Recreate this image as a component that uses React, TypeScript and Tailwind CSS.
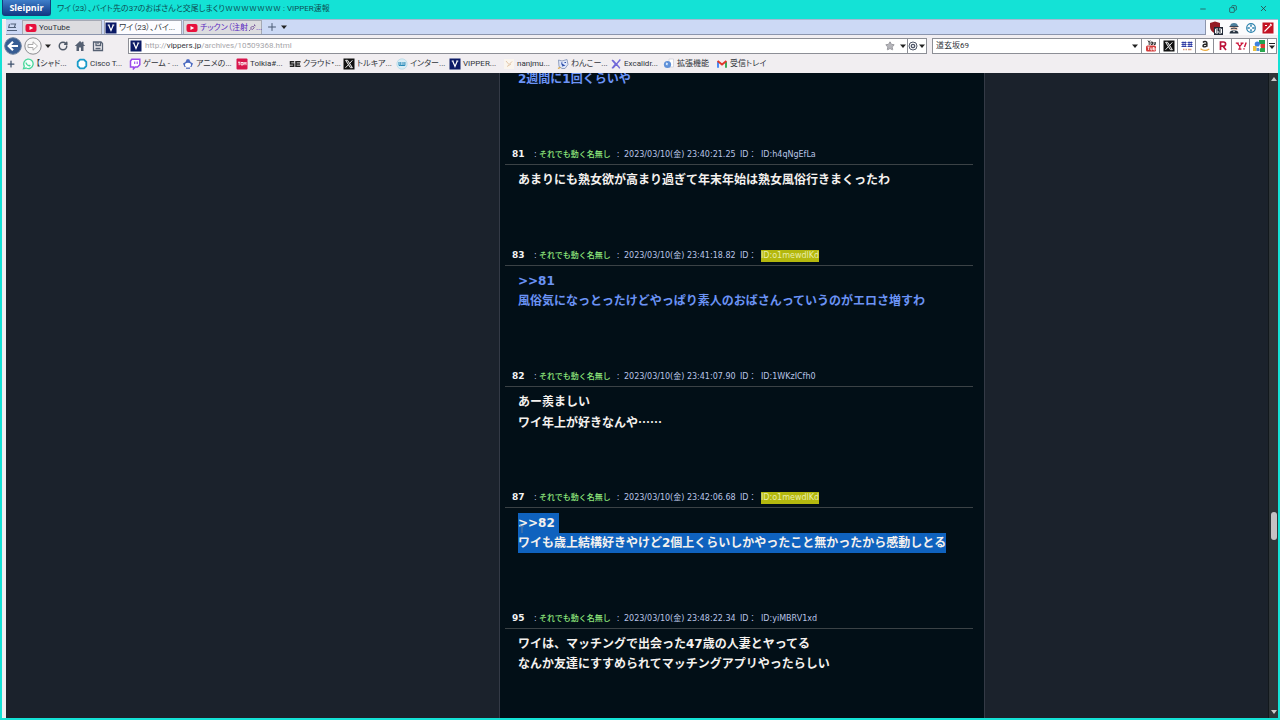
import React from "react";
import { RotateCw, Minus, X as Close, Copy, Plus, Star } from "lucide-react";

const UI = "font-['Roboto','Noto_Sans_CJK_JP',sans-serif] [font-feature-settings:'palt']";
const BODY = "font-['DejaVu_Sans','Noto_Sans_CJK_JP',sans-serif] [font-feature-settings:normal]";

function Caret() {
  return (
    <svg viewBox="0 0 8 8" className="size-2 shrink-0" fill="#222">
      <path d="M1 2.500h6L4 6z" />
    </svg>
  );
}

function YouTubeIcon() {
  return (
    <svg viewBox="0 0 12 12" className="size-3 shrink-0">
      <rect x="0.500" y="2" width="11" height="8" rx="2" fill="#e8103c" />
      <path d="M4.500 4v4L8.200 6z" fill="#fff" />
    </svg>
  );
}

function VIcon() {
  return (
    <svg viewBox="0 0 12 12" className="size-3 shrink-0">
      <rect x="0.500" y="0.500" width="11" height="11" fill="#0b1a66" />
      <path d="M3.700 3L6 8.500 8.300 3M2.700 3h2M7.300 3h2" fill="none" stroke="#fff" strokeWidth="1.200" />
    </svg>
  );
}

function XIcon() {
  return (
    <svg viewBox="0 0 12 12" className="size-3 shrink-0">
      <rect x="0.500" y="0.500" width="11" height="11" fill="#111" />
      <path d="M2.600 2.300h2l4.800 7.400h-2z" fill="#444" stroke="#fff" strokeWidth="0.900" />
      <path d="M9.400 2.300L6.600 5.500M5.300 6.800L2.500 9.800" stroke="#fff" strokeWidth="0.900" />
    </svg>
  );
}

function Pic({ children }: { children: React.ReactNode }) {
  return (
    <svg viewBox="0 0 12 12" className="size-3 shrink-0" fill="none">
      {children}
    </svg>
  );
}

const bookmarks: { text: string; width: string; icon: React.ReactNode }[] = [
  {
    text: "【シャド...",
    width: "w-[54px]",
    icon: (
      <Pic>
        <path d="M1.500 10.700l.8-2.600A4.700 4.700 0 1 1 4.200 10z" stroke="#48d69a" strokeWidth="1.300" fill="#f4fffa" />
        <path d="M4 4.500c.3 2 1.500 3 3.600 3.400l.6-1" stroke="#48d69a" strokeWidth="1.300" />
      </Pic>
    ),
  },
  {
    text: "Cisco T...",
    width: "w-[53px]",
    icon: (
      <Pic>
        <path d="M4 1.700h4L10.300 4v4L8 10.300H4L1.700 8V4z" stroke="#1a9bc9" strokeWidth="1.800" strokeLinejoin="round" fill="#fff" />
      </Pic>
    ),
  },
  {
    text: "ゲーム - ...",
    width: "w-[53px]",
    icon: (
      <Pic>
        <path d="M2.800 1.200h8v5.500L8.500 9H6.300L4.500 10.800V9H1.500V3z" fill="#fff" stroke="#9a49ec" strokeWidth="1.500" />
        <path d="M5.700 3.500v2.600M8.200 3.500v2.600" stroke="#9a49ec" strokeWidth="1.100" />
      </Pic>
    ),
  },
  {
    text: "アニメの...",
    width: "w-[54px]",
    icon: (
      <Pic>
        <path d="M1 5.500L3.500 4 4.800 1.300h2.400L8.500 4 11 5.500 9.500 9H2.500z" fill="#4b6ac0" />
        <ellipse cx="6" cy="7" rx="3" ry="2.200" fill="#fff" />
        <path d="M4 10.200h4" stroke="#4b6ac0" strokeWidth="1.200" />
      </Pic>
    ),
  },
  {
    text: "Tolkia#...",
    width: "w-[53px]",
    icon: (
      <Pic>
        <rect x="0.500" y="0.500" width="11" height="11" rx="1" fill="#d8154c" />
        <path d="M2 4.200h2.400M3.200 4.200v3M5 4.500h2v2.400H5zM8 7.200v-3l1 1.500 1-1.500v3" stroke="#fff" strokeWidth="0.900" />
      </Pic>
    ),
  },
  {
    text: "クラウド・...",
    width: "w-[54px]",
    icon: (
      <Pic>
        <path d="M5.200 3.800H1.500V6h3.200v2.300H.8M11.500 3.800H7v4.500h4.500M7 6h4" stroke="#222" strokeWidth="1.500" />
      </Pic>
    ),
  },
  { text: "トルキア...", width: "w-[53px]", icon: <XIcon /> },
  {
    text: "インター...",
    width: "w-[53px]",
    icon: (
      <Pic>
        <circle cx="6" cy="6" r="5.200" fill="#d9edf5" stroke="#a8d1e3" strokeWidth="0.600" />
        <path d="M3 4v3.500h1.800V4M4.800 7.500H7V4M7 7.500h1.900V4" stroke="#2488b8" strokeWidth="1" />
      </Pic>
    ),
  },
  { text: "VIPPER...", width: "w-[54px]", icon: <VIcon /> },
  {
    text: "nanjmu...",
    width: "w-[54px]",
    icon: (
      <Pic>
        <rect x="1" y="1" width="10" height="10" fill="#faf5ee" />
        <path d="M3 3l3 3.500L9 3.500M4 8.500L8 6" stroke="#e3c7a8" strokeWidth="1" />
      </Pic>
    ),
  },
  {
    text: "わんこー...",
    width: "w-[53px]",
    icon: (
      <Pic>
        <path d="M1.500 2L5 3l5-1.500 1 5-3 4H5L2 8.500z" fill="#dfe7fa" stroke="#8797ba" strokeWidth="0.900" />
        <path d="M4 5h1.500M7.500 4.500H9M5 8l2-.7L4.500 6" stroke="#2a4ca8" strokeWidth="1.200" />
        <path d="M1 10.500l2.500-1.200" stroke="#d7a64c" strokeWidth="1.300" />
      </Pic>
    ),
  },
  {
    text: "Excalidr...",
    width: "w-[53px]",
    icon: (
      <Pic>
        <path d="M2 2l3.500 4L2 10.300M10.300 1.500L6.500 6l3.300 4.300M3 10l7-8M3 2.500l6.500 7.300" stroke="#7068d8" strokeWidth="1.300" />
      </Pic>
    ),
  },
  {
    text: "拡張機能",
    width: "w-[53px]",
    icon: (
      <Pic>
        <path d="M6 1h4.500v8H6z" fill="#fff" stroke="#c8ccd6" strokeWidth="0.700" />
        <circle cx="4.500" cy="6.500" r="3.600" fill="#5f90d8" />
        <path d="M3 4.500l2 .7-.6 2.400-1.600-.8z" fill="#d6e8fb" />
      </Pic>
    ),
  },
  {
    text: "受信トレイ",
    width: "w-[53px]",
    icon: (
      <Pic>
        <path d="M2 9.700V3.500" stroke="#4285f4" strokeWidth="1.900" />
        <path d="M10 9.700V3.500" stroke="#34a853" strokeWidth="1.900" />
        <path d="M1.600 3L6 6.600 10.400 3" stroke="#e0382c" strokeWidth="1.900" />
      </Pic>
    ),
  },
];

const engines: { name: string; icon: React.ReactNode }[] = [
  {
    name: "YouTube",
    icon: (
      <Pic>
        <path d="M3 .5l1.200 2 1-2M4.200 2.500V5M6 2h1.500v2.500H6zM9 2v2.500h1.300V2" stroke="#222" strokeWidth="0.900" />
        <rect x="1" y="5.500" width="10" height="6" rx="1.500" fill="#d33a3a" />
        <path d="M2.500 7h2.200M3.600 7v3M5.800 7.500V10h1.300V7.500M8.500 7v3H10V8H8.500" stroke="#fff" strokeWidth="0.800" />
      </Pic>
    ),
  },
  { name: "X", icon: <XIcon /> },
  {
    name: "価格.com",
    icon: (
      <Pic>
        <path d="M.5 2.500h5M.5 4.500h5M.5 6.500h5M2 1.500v5.500M4.200 1.500v5.500M6.500 2.500h5M6.500 4.500h5M6.500 6.500h5M8 1.500v5.500M10.200 1.500v5.500" stroke="#2633a0" strokeWidth="0.900" />
        <path d="M2 9.500h1.500M4.500 9.500H6M7 9.500h3.500" stroke="#d79b80" strokeWidth="1.500" />
      </Pic>
    ),
  },
  {
    name: "Amazon",
    icon: (
      <Pic>
        <path d="M4 2.500C5 1 8 1.200 7.900 3v3.800M7.800 4C5.500 4 4 4.600 4 5.900s2.600 1.500 3.800-.3" stroke="#222" strokeWidth="1.400" />
        <path d="M1.500 8.700c2.700 2 6.200 2 8.800.2" stroke="#eba83a" strokeWidth="1.200" />
      </Pic>
    ),
  },
  {
    name: "楽天",
    icon: (
      <Pic>
        <path d="M3.500 10V2h3a2 2 0 0 1 0 4.200h-3M6 6.200L9 10" stroke="#bc1238" strokeWidth="1.700" />
      </Pic>
    ),
  },
  {
    name: "Yahoo!",
    icon: (
      <Pic>
        <path d="M.8 3.200h3M5.500 3.200h3M2.300 3.200l2.500 3.300L7.500 3.200M4.800 6.200v3M3.200 9.200h3.200" stroke="#cc1238" strokeWidth="1.200" />
        <path d="M11.200 2.500L9.500 7M9 8.300v1.200" stroke="#cc1238" strokeWidth="1.400" />
      </Pic>
    ),
  },
  {
    name: "Google",
    icon: (
      <Pic>
        <path d="M6 0h6v4H6z" fill="#21a452" />
        <path d="M7.500 4H12v4H7.500z" fill="#dd3d32" />
        <path d="M7 8h5v4H7z" fill="#2aa74e" />
        <circle cx="4.300" cy="4" r="2.600" fill="#3f82df" />
        <path d="M0 6h3.500v5H0z" fill="#edc13f" />
        <path d="M3.500 8h3v3h-3z" fill="#5894dc" />
        <path d="M6 5l2 3-2 1z" fill="#fff" />
      </Pic>
    ),
  },
];

type Post = {
  no: number;
  time: string;
  id: string;
  marked?: boolean;
  tone?: "blue" | "selected";
  lines: string[];
};

const posts: Post[] = [
  { no: 81, time: "23:40:21.25", id: "h4qNgEfLa", lines: ["あまりにも熟女欲が高まり過ぎて年末年始は熟女風俗行きまくったわ"] },
  { no: 83, time: "23:41:18.82", id: "o1mewdlKd", marked: true, tone: "blue", lines: [">>81", "風俗気になっとったけどやっぱり素人のおばさんっていうのがエロさ増すわ"] },
  { no: 82, time: "23:41:07.90", id: "1WKzICfh0", lines: ["あー羨ましい", "ワイ年上が好きなんや……"] },
  { no: 87, time: "23:42:06.68", id: "o1mewdlKd", marked: true, tone: "selected", lines: [">>82", "ワイも歳上結構好きやけど2個上くらいしかやったこと無かったから感動しとる"] },
  { no: 95, time: "23:48:22.34", id: "yiMBRV1xd", lines: ["ワイは、マッチングで出会った47歳の人妻とヤってる", "なんか友達にすすめられてマッチングアプリやったらしい"] },
];

function PostItem({ post }: { post: Post }) {
  const tone = post.tone === "blue" ? "text-[#6b93f5]" : "text-[#f4f1ee]";
  return (
    <article className="pb-14">
      <header className="flex h-5 items-center border-b border-[#3b4246] pt-px pl-[7px] text-[8px] whitespace-pre text-[#b9c4e6]">
        <b className="w-[22px] text-[9px] text-[#f4f4f4]">{post.no}</b>
        <span className="w-[5px]">:</span>
        <span className="w-[73px] font-medium text-[#8fe77c]">それでも動く名無し</span>
        <span className="w-3 text-center">:</span>
        <time className="w-[116px]">2023/03/10(金) {post.time}</time>
        <span className="w-[21px]">ID：</span>
        <span className={post.marked ? "bg-[#b4b80e] leading-3 text-[#e9edaa]" : "leading-3"}>ID:{post.id}</span>
      </header>
      <div className={`pt-[5px] pl-[13px] text-[12px] leading-5 font-bold whitespace-nowrap ${tone}`}>
        {post.lines.map((line, i) => {
          const family = line.includes("…") ? "font-['Noto_Sans_CJK_JP',sans-serif]" : "";
          const selected = post.tone === "selected";
          return (
            <p key={line} className={selected ? `relative w-fit bg-[#0f62be] ${i === 0 ? "pr-1" : ""}` : family}>
              {line}
              {selected && i === 0 && (
                <svg viewBox="0 0 6 12" className="absolute top-3 left-px h-3 w-1.5" fill="none" stroke="#5f7ba3">
                  <path d="M1 1h1.500L3 1.500 3.500 1H5M3 1.500v9M1 11h4" />
                </svg>
              )}
            </p>
          );
        })}
      </div>
    </article>
  );
}

export default function App() {
  return (
    <div className={`flex h-screen flex-col overflow-hidden bg-[#14e2d6] text-[8px] text-[#30343a] ${UI}`}>
      <header className="flex h-[19px] shrink-0 items-center pb-0.5">
        <button className="ml-0.5 h-4 w-[49px] self-start rounded-b-[3px] border border-t-0 border-[#143d7c] bg-linear-to-b from-[#3f7fca] to-[#123a86] font-['Open_Sans',sans-serif] text-[9px] leading-[13px] font-bold text-white">
          Sleipnir
        </button>
        <h1 className="ml-1.5 flex-1 whitespace-nowrap text-[#0d4f55]">
          ワイ（23）、バイト先の37のおばさんと交尾しまくりｗｗｗｗｗｗｗ : VIPPER速報
        </h1>
        <button aria-label="最小化" className="w-[30px]"><Minus className="mx-auto size-2" /></button>
        <button aria-label="元に戻す" className="w-[30px]"><Copy className="mx-auto size-2 -scale-x-100" /></button>
        <button aria-label="閉じる" className="mr-0.5 w-[30px]"><Close className="mx-auto size-[9px]" /></button>
      </header>

      <div className="mx-0.5 mb-0.5 flex min-h-0 flex-1 flex-col border-l-4 border-[#f1eef1] bg-[#f1eef1]">
        <div className="flex h-4 shrink-0 border-t border-[#a9b8d2]">
          <nav aria-label="タブ" className="flex flex-1 items-end border-r border-b border-[#8b95ad] bg-[#ccd9f5] whitespace-nowrap">
            <button aria-label="タブ一覧" className="mb-px w-4">
              <Pic><path d="M1 9.500h10M3 6.500h7M4.500 3h5L8.300 6.500M3.500 3.200L2.500 7" stroke="#51617b" strokeWidth="1.100" /></Pic>
            </button>
            <button className="flex h-3.5 w-20 items-center gap-0.5 border border-b-0 border-[#a5a9b4] bg-[#dcdcdf] pl-0.5"><YouTubeIcon />YouTube</button>
            <button className="ml-0.5 flex h-3.5 w-[78px] items-center gap-0.5 border border-b-0 border-[#a5a9b4] bg-[#fcfcff]"><VIcon />ワイ（23）、バイ...</button>
            <button className="ml-px flex h-3.5 w-[79px] items-center gap-0.5 border border-b-0 border-[#a5a9b4] bg-[#dcdcdf] pl-0.5 text-[#5a28c0]">
              <YouTubeIcon />
              <span className="flex items-center">
                チックン（注射
                <svg viewBox="0 0 8 8" className="size-2" fill="none" stroke="#7a5a9c"><path d="M1 7l1.500-1.500M2.500 4l2-2 1.700 1.700-2 2zM5.500 2.500L7 1M6.200.500l1.300 1.300" /></svg>
                ...
              </span>
            </button>
            <button aria-label="新しいタブ" className="ml-1 flex h-3.5 items-center"><Plus className="size-3 text-[#4b5b75]" /></button>
            <button aria-label="タブメニュー" className="ml-0.5 flex h-3.5 items-center"><Caret /></button>
          </nav>
          <div className="flex w-[72px] items-center justify-between bg-[#fbfbfd] pr-1 pl-[3px]">
            <button aria-label="広告ブロック">
              <svg viewBox="0 0 14 14" className="size-3.5">
                <path d="M1 2l5-1.500L11 2v4c0 3-2 5-5 6.500C3 11 1 9 1 6z" fill="#941c25" />
                <rect x="5" y="6" width="9" height="8" fill="#222936" />
                <path d="M9 8H6.500v4H9v-2H7M10 8h2.500v4H10M10.500 10h2" fill="none" stroke="#fff" strokeWidth="1" />
              </svg>
            </button>
            <button aria-label="ユーザーエージェント">
              <Pic>
                <path d="M2 4.500C2 2 4 1 6 1s4 1 4 3.500z" fill="#4d7f9c" />
                <rect x="2.500" y="4" width="7" height="4" fill="#edc8b4" />
                <path d="M1.500 4.500h9M3 6.800l3-.8 3 .8" stroke="#3b4657" strokeWidth="1.100" />
                <path d="M1.500 11.500c0-2.500 2-3 4.500-3s4.500.500 4.500 3z" fill="#26313f" />
                <path d="M5 9l1 1.500L7 9z" fill="#fff" />
              </Pic>
            </button>
            <button aria-label="拡張">
              <Pic><circle cx="6" cy="6" r="4.300" stroke="#2d83ad" strokeWidth="1.200" /><path d="M6 2.500v2.300M6 7.200v2.300M2.500 6h2.300M7.200 6h2.300" stroke="#2d83ad" strokeWidth="1.500" /></Pic>
            </button>
            <button aria-label="編集">
              <Pic><rect x="0.500" y="0.500" width="11" height="11" fill="#c31324" /><path d="M2.500 9.500l6-6M8.200 2l1.500 1.500M3 3.500h2" stroke="#fff" strokeWidth="1.200" /></Pic>
            </button>
          </div>
        </div>

        <div className="flex h-[22px] shrink-0 items-center">
          <button aria-label="戻る" className="-ml-0.5">
            <svg viewBox="0 0 18 18" className="size-[18px]">
              <circle cx="9" cy="9" r="8.300" fill="#375d93" stroke="#6c829f" />
              <path d="M14 9H5M9 4.700L4.700 9 9 13.300" fill="none" stroke="#fff" strokeWidth="2.200" />
            </svg>
          </button>
          <button aria-label="進む" className="ml-0.5">
            <svg viewBox="0 0 18 18" className="size-[18px]">
              <circle cx="9" cy="9" r="8.200" fill="#f7f7f7" stroke="#8c8c90" />
              <path d="M4 7.500h5V4.800L13.500 9 9 13.200v-2.700H4z" fill="#fff" stroke="#aaa" />
            </svg>
          </button>
          <button aria-label="履歴" className="ml-0.5"><Caret /></button>
          <button aria-label="更新" className="ml-1.5"><RotateCw className="size-2.5 text-[#4f5968]" strokeWidth={3.500} /></button>
          <button aria-label="ホーム" className="ml-1.5">
            <Pic><path d="M6 1L.8 6H2.500v5H5V7.500h2V11h2.500V6h1.700L9.500 4.300V1.800H8v1z" fill="#566173" /></Pic>
          </button>
          <button aria-label="保存" className="ml-1.5">
            <Pic><path d="M1.500 2v8.500h9V3.500L9 2zM4 2v3.500h4.500V2M3.500 8.500h5M6 2v2" stroke="#566173" strokeWidth="1.300" /></Pic>
          </button>
          <form className="ml-6 flex h-4 flex-1 items-center border border-[#8d8f96] bg-white pl-px">
            <VIcon />
            <label htmlFor="address" className="ml-[3px] whitespace-nowrap text-[#a6a6aa]">
              http://<span className="text-[#34363c]">vippers.jp</span>/archives/10509368.html
            </label>
            <input id="address" type="text" className="min-w-0 flex-1 outline-none" />
            <button type="button" aria-label="お気に入り"><Star className="size-2.5 fill-[#b5b5ba] text-[#8e8e94]" /></button>
            <button type="button" aria-label="候補" className="ml-1"><Caret /></button>
            <button type="button" aria-label="エンジン" className="flex h-full items-center border-l border-[#8d8f96]">
              <svg viewBox="0 0 10 10" className="size-2.5" fill="none" stroke="#4e5668">
                <circle cx="5" cy="5" r="4" strokeWidth="1" /><circle cx="5" cy="5" r="1.700" strokeWidth="1.300" />
              </svg>
              <Caret />
            </button>
          </form>
          <form className="mr-px ml-[5px] flex h-4 w-[345px] items-center border border-[#8d8f96] bg-white">
            <input aria-label="検索" defaultValue="道玄坂69" className="min-w-0 flex-1 pl-[3px] outline-none" />
            <button type="button" aria-label="検索履歴" className="px-0.5"><Caret /></button>
            {engines.map((e) => (
              <button type="button" key={e.name} aria-label={e.name} className="flex h-full w-[18px] items-center justify-center border-l border-[#8d8f96]">{e.icon}</button>
            ))}
            <button type="button" aria-label="その他" className="flex h-full w-[9px] items-center border-l border-[#8d8f96]">
              <svg viewBox="0 0 8 8" className="size-2"><path d="M1 1.500h6" stroke="#222" /><path d="M1 3.500h6L4 7z" fill="#222" /></svg>
            </button>
          </form>
        </div>

        <nav aria-label="お気に入り" className="flex h-4 shrink-0 items-center pb-0.5 whitespace-nowrap">
          <button aria-label="追加" className="w-4"><Plus className="size-2.5 text-[#3d506c]" strokeWidth={3} /></button>
          {bookmarks.map((b) => (
            <a key={b.text} href="#" className={`flex shrink-0 items-center gap-0.5 ${b.width}`}>{b.icon}{b.text}</a>
          ))}
        </nav>

        <div className={`flex min-h-0 flex-1 bg-[#1b222c] ${BODY}`}>
          <div className="flex-1" />
          <main className="w-[486px] overflow-hidden border-x border-[#343a46] bg-[#020f17] pr-[11px] pl-[5px]">
            <p className="-mt-1 pb-14 pl-[13px] text-[12px] leading-5 font-bold text-[#6b93f5]">2週間に1回くらいや</p>
            {posts.map((p) => <PostItem key={p.no} post={p} />)}
          </main>
          <div className="w-[283px]" />
          <div className="flex w-2.5 flex-col items-center border-l border-[#12181c] bg-[#2f3538] py-0.5">
            <svg viewBox="0 0 8 8" className="size-2" fill="#c9c9c9"><path d="M1 6h6L4 2z" /></svg>
            <div className="flex-[430]" />
            <div className="h-7 w-1.5 rounded-full bg-[#c4c2c4]" />
            <div className="flex-[168]" />
            <svg viewBox="0 0 8 8" className="size-2" fill="#c9c9c9"><path d="M1 2h6L4 6z" /></svg>
          </div>
        </div>
      </div>
    </div>
  );
}
